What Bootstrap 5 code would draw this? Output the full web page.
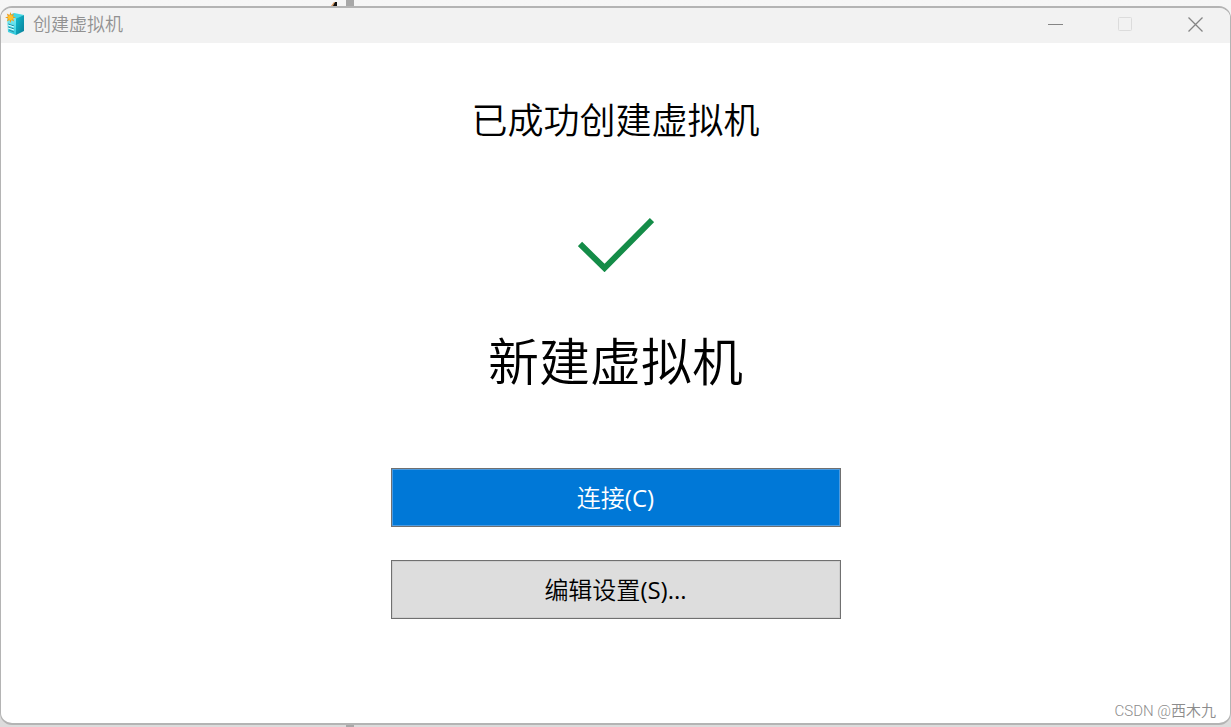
<!DOCTYPE html>
<html lang="zh-CN">
<head>
<meta charset="utf-8">
<meta name="viewport" content="width=device-width, initial-scale=1">
<title>创建虚拟机</title>
<link href="https://cdn.jsdelivr.net/npm/bootstrap@5.3.0/dist/css/bootstrap.min.css" rel="stylesheet">
<style>
  body {
    font-family: "Open Sans", "Noto Sans CJK SC", sans-serif;
    color: #000;
    background: linear-gradient(90deg, transparent 346px, #a8a8a8 346px 354px, transparent 354px), linear-gradient(#f6f6f6, #dcdcdc);
  }
  .desktop { padding: 6px 0 2px; }
  .desktop-mark { top: 2px; left: 331px; }
  .vm-window { border: 1px solid #b4b4b4; border-width: 2px 1px; border-radius: 12px; overflow: hidden; }
  .title-bar { height: 35px; background: #f2f2f2; color: #919191; }
  .title-text { font-family: "Noto Sans CJK SC", sans-serif; font-size: 18px; line-height: 30px; font-weight: 350; padding-left: 8px; }
  .window-btn { width: 70px; height: 32px; color: #858585; }
  .window-btn:disabled { color: #dcdcdc; opacity: 1; }
  .success-title, .vm-name { font-family: "Noto Sans CJK SC", sans-serif; font-weight: 350; }
  .success-title { font-size: 36px; line-height: 48px; margin-top: 51px; }
  .check-icon { margin-top: 75px; }
  .vm-name { font-size: 51px; line-height: 68px; margin-top: 53px; }
  .actions { width: 450px; max-width: 92%; gap: 33px; margin-top: 75px; }
  .action-btn {
    height: 59px; font-size: 24px; line-height: 32px; font-weight: 400;
    border: 1px solid #707070; box-shadow: inset 0 0 0 1px #cfcfcf;
    --bs-btn-color: #000; --bs-btn-bg: #ddd;
    --bs-btn-hover-color: #000; --bs-btn-hover-bg: #e5e5e5; --bs-btn-hover-border-color: #707070;
  }
  .action-main {
    box-shadow: inset 0 0 0 1px #4d9be0;
    --bs-btn-color: #fff; --bs-btn-bg: #0078d7;
    --bs-btn-hover-color: #fff; --bs-btn-hover-bg: #1a86db;
  }
  .cjk { font-family: "Noto Sans CJK SC", sans-serif; font-weight: 350; }
  .credit { color: #8c8c8c; font-family: Roboto, "Noto Sans CJK SC", sans-serif; font-size: 15px; line-height: 24px; font-weight: 350; padding-right: 14px; }
</style>
</head>
<body>
<div class="desktop position-relative overflow-hidden min-vh-100 d-flex">
  <svg class="desktop-mark position-absolute" width="7" height="5" viewBox="0 0 7 5" aria-hidden="true"><path d="M0 5 4 0h2v5z" fill="#111"/><path d="M0 4 3 0h1L2 4z" fill="#d99a62"/></svg>
  <div class="vm-window position-relative bg-white flex-grow-1 d-flex flex-column">
    <header class="title-bar d-flex flex-shrink-0">
      <svg class="ms-1 mt-1" width="20" height="24" viewBox="0 0 20 24" aria-hidden="true">
        <defs>
          <linearGradient id="side" x1="0" y1="0" x2="1" y2="1"><stop offset="0" stop-color="#13bfd1"/><stop offset="1" stop-color="#087d98"/></linearGradient>
          <linearGradient id="front" x1="0" y1="0" x2="0" y2="1"><stop offset="0" stop-color="#83edf5"/><stop offset="1" stop-color="#2fc9dc"/></linearGradient>
        </defs>
        <path d="M2 4 9 1l10 2-8 4z" fill="#42d8e4"/>
        <path d="M11 6.500 19 3v16l-8 4z" fill="url(#side)"/>
        <path d="M2 5l9 2v16l-8-3z" fill="url(#front)"/>
        <path d="M3 12l6 2M3 15l6 2M4 18l5 2" stroke="#2690a6" stroke-width="1"/>
        <path d="M3 13l6 2M3 16l6 2" stroke="#dcffff" stroke-width="1"/>
        <path d="M5.500 0l1 3 2.500-1.600-1 3 3 1.100-3 1.100 1.300 2.900-2.800-1.500-1 3-1-3L1.800 9.500 3 6.600 0 5.500l3-1.100-1.200-3L4.500 3z" fill="#f39a16"/>
        <circle cx="5.500" cy="5.500" r="2.500" fill="#ffc22d"/>
      </svg>
      <span class="title-text">创建虚拟机</span>
      <div class="d-flex ms-auto">
        <button type="button" class="window-btn btn p-0 border-0" aria-label="最小化"><svg class="d-block mx-auto" width="16" height="16" viewBox="0 0 16 16"><path d="M1 8.500h15" stroke="currentColor"/></svg></button>
        <button type="button" class="window-btn btn p-0 border-0" aria-label="最大化" disabled><svg class="d-block mx-auto" width="16" height="16" viewBox="0 0 16 16"><rect x="1.500" y="1.500" width="13" height="13" rx="1" fill="none" stroke="currentColor"/></svg></button>
        <button type="button" class="window-btn btn p-0 border-0" aria-label="关闭"><svg class="d-block mx-auto" width="16" height="16" viewBox="0 0 16 16"><path d="M1.500 1.500l14 14M15.500 1.500l-14 14" stroke="currentColor" stroke-width="1.300"/></svg></button>
      </div>
    </header>
    <main class="d-flex flex-column align-items-center flex-grow-1 text-center">
      <h1 class="success-title mb-0">已成功创建虚拟机</h1>
      <svg class="check-icon" width="76" height="55" viewBox="0 0 76 55" role="img" aria-label="成功"><path d="M2 27l24.500 24L74 3" fill="none" stroke="#148c48" stroke-width="6"/></svg>
      <h2 class="vm-name mb-0">新建虚拟机</h2>
      <div class="actions d-flex flex-column">
        <button type="button" class="action-btn action-main btn rounded-0"><span class="cjk">连接</span>(C)</button>
        <button type="button" class="action-btn btn rounded-0"><span class="cjk">编辑设置</span>(S)...</button>
      </div>
    </main>
    <footer class="credit text-end">CSDN @西木九</footer>
  </div>
</div>
<script src="https://cdn.jsdelivr.net/npm/bootstrap@5.3.0/dist/js/bootstrap.bundle.min.js"></script>
</body>
</html>
